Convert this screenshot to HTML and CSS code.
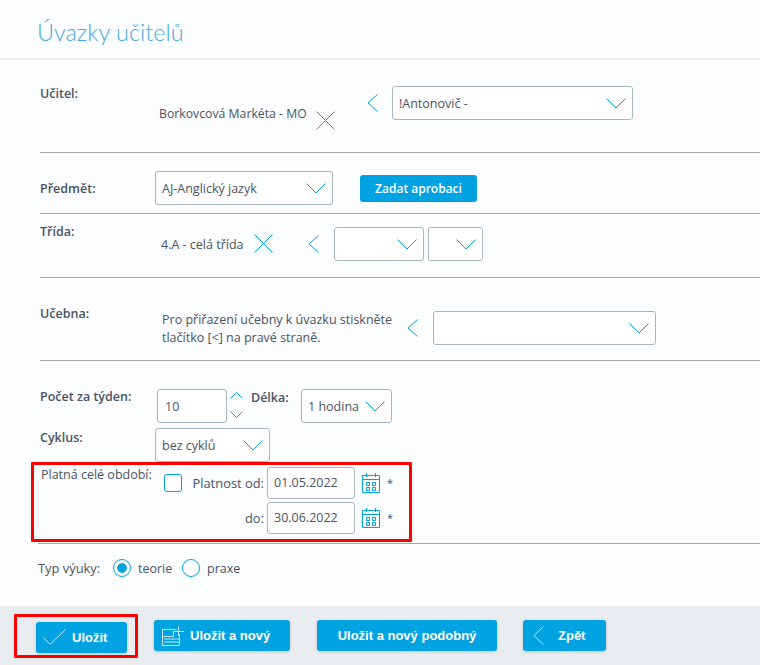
FILE: index.html
```html
<!DOCTYPE html>
<html lang="cs">
<head>
  <meta charset="UTF-8">
  <title>Úvazky učitelů</title>
  <link rel="stylesheet" href="styles.css">
</head>
<body>
  <svg class="sprites" width="0" height="0">
    <symbol id="chev-down" viewBox="0 0 20 11"><path d="M0.5 0.5 L10 10 L19.5 0.5" fill="none" stroke="#00a2e2"/></symbol>
    <symbol id="chev-left" viewBox="0 0 11 18"><path d="M10.5 0.5 L1 9 L10.5 17.5" fill="none" stroke="#00a2e2"/></symbol>
    <symbol id="cross" viewBox="0 0 19 19"><path d="M0.5 0.5 L18.5 18.5 M18.5 0.5 L0.5 18.5" fill="none" stroke="#00a2e2"/></symbol>
    <symbol id="calendar" viewBox="0 0 18 20"><path d="M0.5 2.5 H17.5 V19.5 H0.5 Z M0.5 6.5 H17.5 M4.5 0 V4 M13.5 0 V4 M4.5 9.5 H7.5 V12.5 H4.5 Z M10.5 9.5 H13.5 V12.5 H10.5 Z M4.5 14.5 H7.5 V17.5 H4.5 Z M10.5 14.5 H13.5 V17.5 H10.5 Z" fill="none" stroke="#00a2e2"/></symbol>
  </svg>

  <h1 class="title">Úvazky učitelů</h1>

  <div class="row row-teacher">
    <label class="row-label">Učitel:</label>
    <span class="value teacher-name">Borkovcová Markéta - MO</span>
    <svg class="icon cross teacher-cross"><use href="#cross"/></svg>
    <svg class="icon chev-left teacher-chev"><use href="#chev-left"/></svg>
    <div class="select select-teacher"><span>!Antonovič -</span><svg class="icon chev-down"><use href="#chev-down"/></svg></div>
  </div>

  <div class="row row-subject">
    <label class="row-label subject-label">Předmět:</label>
    <div class="select select-subject"><span>AJ-Anglický jazyk</span><svg class="icon chev-down"><use href="#chev-down"/></svg></div>
    <button class="small-btn">Zadat aprobaci</button>
  </div>

  <div class="row row-class">
    <label class="row-label">Třída:</label>
    <span class="value class-name">4.A - celá třída</span>
    <svg class="icon cross class-cross"><use href="#cross"/></svg>
    <svg class="icon chev-left class-chev"><use href="#chev-left"/></svg>
    <div class="select select-class"><span></span><svg class="icon chev-down"><use href="#chev-down"/></svg></div>
    <div class="select select-group"><span></span><svg class="icon chev-down"><use href="#chev-down"/></svg></div>
  </div>

  <div class="row row-room">
    <label class="row-label">Učebna:</label>
    <p class="value room-note">Pro přiřazení učebny k úvazku stiskněte tlačítko [&lt;] na pravé straně.</p>
    <svg class="icon chev-left room-chev"><use href="#chev-left"/></svg>
    <div class="select select-room"><span></span><svg class="icon chev-down"><use href="#chev-down"/></svg></div>
  </div>

  <div class="block">
    <div class="count-line">
      <label class="row-label count-label">Počet za týden:</label>
      <div class="field count-field">10</div>
      <div class="spin">
        <svg viewBox="0 0 13 7"><path d="M0.5 6.5 L6.5 0.5 L12.5 6.5" fill="none" stroke="currentColor"/></svg>
        <svg viewBox="0 0 13 7"><path d="M0.5 0.5 L6.5 6.5 L12.5 0.5" fill="none" stroke="currentColor"/></svg>
      </div>
      <label class="row-label length-label">Délka:</label>
      <div class="select select-length"><span>1 hodina</span><svg class="icon chev-down"><use href="#chev-down"/></svg></div>
    </div>
    <div class="cycle-line">
      <label class="row-label cycle-label">Cyklus:</label>
      <div class="select select-cycle"><span>bez cyklů</span><svg class="icon chev-down"><use href="#chev-down"/></svg></div>
    </div>
    <div class="validity">
      <span class="validity-label">Platná celé období:</span>
      <span class="checkbox"></span>
      <div class="dates">
        <div class="date-line">
          <span class="date-label">Platnost od:</span>
          <div class="field date-field">01.05.2022</div>
          <svg class="icon calendar"><use href="#calendar"/></svg>
          <span class="req">*</span>
        </div>
        <div class="date-line">
          <span class="date-label">do:</span>
          <div class="field date-field">30.06.2022</div>
          <svg class="icon calendar"><use href="#calendar"/></svg>
          <span class="req">*</span>
        </div>
      </div>
    </div>
  </div>

  <div class="teach-type">
    <span class="type-label">Typ výuky:</span>
    <span class="radio radio-on"></span><span class="radio-text">teorie</span>
    <span class="radio"></span><span class="radio-text">praxe</span>
  </div>

  <footer class="actions">
    <div class="save-mark">
      <button class="btn btn-save">
        <svg class="btn-icon" width="34" height="20" viewBox="0 0 34 20"><path d="M7.5 10.5 L14 17.5 L29.5 2.5" fill="none" stroke="currentColor"/></svg>
        Uložit
      </button>
    </div>
    <button class="btn btn-new">
      <svg class="btn-icon" width="23" height="20" viewBox="0 0 23 20"><path d="M15.5 3.5 H1.5 V19.5 H18.5 V8 M1.5 10.5 H12.5 V6 M3 13 H18 M3 16 H18 M12 5.5 H23 M17.5 0 V10" fill="none" stroke="currentColor"/></svg>
      Uložit a nový
    </button>
    <button class="btn btn-similar">Uložit a nový podobný</button>
    <button class="btn btn-back">
      <svg class="btn-icon" width="11" height="19" viewBox="0 0 11 19"><path d="M10.5 0.5 L1 9.5 L10.5 18.5" fill="none" stroke="currentColor"/></svg>
      Zpět
    </button>
  </footer>
</body>
</html>
```

FILE: styles.css
```css
:root {
  --blue: #00a2e2;
  --text: #4a5462;
  --border: #a9b7c0;
  --line: #a4a9ab;
}

* {
  box-sizing: border-box;
}

body {
  margin: 0;
  height: 665px;
  overflow: hidden;
  background: #fbfdfe;
  color: var(--text);
  font-family: "Open Sans", "Noto Sans", sans-serif;
  font-size: 12.5px;
}

.sprites {
  position: absolute;
}

.title {
  margin: 0;
  height: 60px;
  padding: 14px 0 0 37px;
  border-bottom: 2px solid #eceff1;
  color: #4aa8df;
  font-family: Lato, sans-serif;
  font-size: 23.5px;
  font-weight: 300;
  line-height: 36px;
}

.row {
  display: flex;
  align-items: flex-start;
  margin-left: 40px;
  border-bottom: 1px solid var(--line);
}

.row-label {
  font-weight: 600;
  line-height: 18px;
}

.icon {
  flex: none;
}

.cross {
  width: 19px;
  height: 19px;
}

.chev-left {
  width: 11px;
  height: 18px;
}

.chev-down {
  width: 20px;
  height: 11px;
}

.select {
  display: flex;
  flex: none;
  align-items: center;
  justify-content: space-between;
  height: 34px;
  padding: 0 6px;
  border: 1px solid var(--border);
  border-radius: 3px;
  background: #fff;
  line-height: 32px;
}

.select span {
  padding-top: 1px;
}

.value {
  margin: 0;
}

/* row 1 */
.row-teacher {
  height: 93px;
}

.row-teacher .row-label {
  margin-top: 25px;
  width: 119px;
}

.teacher-name {
  margin-top: 45px;
  width: 157px;
  font-size: 12.25px;
  line-height: 18px;
}

.teacher-cross {
  margin-top: 51px;
}

.teacher-chev {
  margin: 34px 0 0 32px;
}

.select-teacher {
  width: 241px;
  margin: 26px 0 0 14px;
}

/* row 2 */
.row-subject {
  align-items: center;
  height: 61px;
}

.subject-label {
  width: 115px;
  margin-top: 12px;
}

.select-subject {
  width: 178px;
  margin-top: 10px;
}

.small-btn {
  width: 117px;
  height: 27px;
  margin: 10px 0 0 27px;
  padding: 0;
  border: 0;
  border-radius: 3px;
  background: var(--blue);
  color: #fff;
  font-family: "Open Sans", sans-serif;
  font-size: 12px;
  font-weight: 600;
}

/* row 3 */
.row-class {
  height: 64px;
}

.row-class .row-label {
  margin-top: 9px;
  width: 121px;
}

.class-name {
  margin-top: 22px;
  width: 93px;
  line-height: 18px;
}

.class-cross {
  margin-top: 20px;
}

.class-chev {
  margin: 21px 0 0 35px;
}

.select-class {
  width: 90px;
  margin: 13px 0 0 15px;
}

.select-group {
  width: 55px;
  margin: 13px 0 0 4px;
}

/* row 4 */
.row-room {
  height: 83px;
}

.row-room .row-label {
  margin-top: 27px;
  width: 122px;
}

.room-note {
  width: 238px;
  margin-top: 33px;
  line-height: 18px;
}

.room-chev {
  margin: 41px 0 0 7px;
}

.select-room {
  width: 223px;
  margin: 33px 0 0 15px;
}

/* count, cycle, validity */
.block {
  height: 183px;
  padding-top: 28px;
  margin-left: 38px;
  border-bottom: 1px solid var(--line);
}

.count-line {
  display: flex;
  padding-left: 2px;
}

.field {
  flex: none;
  height: 34px;
  padding-left: 7px;
  border: 1px solid var(--border);
  border-radius: 3px;
  background: #fff;
  line-height: 34px;
}

.count-label {
  width: 117px;
  margin-top: -1px;
}

.count-field {
  width: 70px;
}

.spin {
  display: flex;
  flex-direction: column;
  gap: 12px;
  width: 13px;
  margin: 3px 0 0 3px;
  color: var(--blue);
}

.spin svg {
  display: block;
  width: 13px;
  height: 7px;
}

.length-label {
  width: 50px;
  margin: 0 0 0 8px;
}

.select-length {
  width: 91px;
}

.cycle-line {
  display: flex;
  padding-left: 2px;
  margin-top: 5px;
}

.cycle-label {
  width: 115px;
  margin-top: 1px;
}

.select-cycle {
  width: 115px;
}

.validity {
  display: flex;
  width: 381px;
  height: 80px;
  margin-left: -7px;
  border: 3px solid #f00;
  padding-left: 7px;
  border-radius: 1px;
}

.validity-label {
  width: 123px;
  margin-top: 1px;
  line-height: 18px;
}

.checkbox {
  flex: none;
  width: 18px;
  height: 18px;
  margin-top: 9px;
  border: 1px solid var(--blue);
  border-radius: 3px;
  background: #fff;
}

.dates {
  display: flex;
  flex-direction: column;
  gap: 3px;
  margin: 2px 0 0 3px;
}

.date-line {
  display: flex;
  align-items: center;
  height: 32px;
}

.date-label {
  width: 82px;
  padding-right: 3px;
  font-size: 12.9px;
  text-align: right;
}

.date-field {
  width: 88px;
  height: 32px;
  padding-left: 6px;
  line-height: 30px;
}

.calendar {
  width: 18px;
  height: 20px;
  margin-left: 7px;
}

.req {
  margin: -2px 0 0 7px;
  font-size: 11px;
}

.teach-type {
  display: flex;
  align-items: center;
  height: 62px;
  padding: 0 0 14px 38px;
}

.type-label {
  width: 75px;
  font-size: 12.9px;
}

.radio {
  flex: none;
  width: 18px;
  height: 18px;
  border: 1px solid var(--blue);
  border-radius: 50%;
  background: #fff;
}

.radio-on {
  background: radial-gradient(circle, var(--blue) 0 4.5px, #fff 5px);
}

.radio-text {
  width: 51px;
  padding-left: 7px;
}

/* footer buttons */
.actions {
  display: flex;
  align-items: center;
  height: 59px;
  padding-left: 36px;
  background: #e9edef;
}

.btn {
  display: flex;
  align-items: center;
  height: 31px;
  padding: 0;
  border: 0;
  border-radius: 3px;
  background: var(--blue);
  box-shadow: 0 1px 3px rgba(0, 0, 0, 0.18);
  color: #fff;
  font-family: "Liberation Sans", Arial, sans-serif;
  font-size: 13px;
  font-weight: 700;
}

.btn-icon {
  flex: none;
  opacity: 0.75;
}

.save-mark {
  margin-left: -22px;
  padding: 5px 8px 2px 19px;
  border: 3px solid #f00;
  border-radius: 1px;
}

.btn-save {
  width: 91px;
  gap: 2px;
}

.btn-new {
  width: 136px;
  margin-left: 16px;
  gap: 6px;
  padding-left: 7px;
}

.btn-similar {
  justify-content: center;
  width: 180px;
  margin-left: 27px;
}

.btn-back {
  width: 83px;
  margin-left: 26px;
  gap: 14px;
  padding-left: 10px;
}
```
